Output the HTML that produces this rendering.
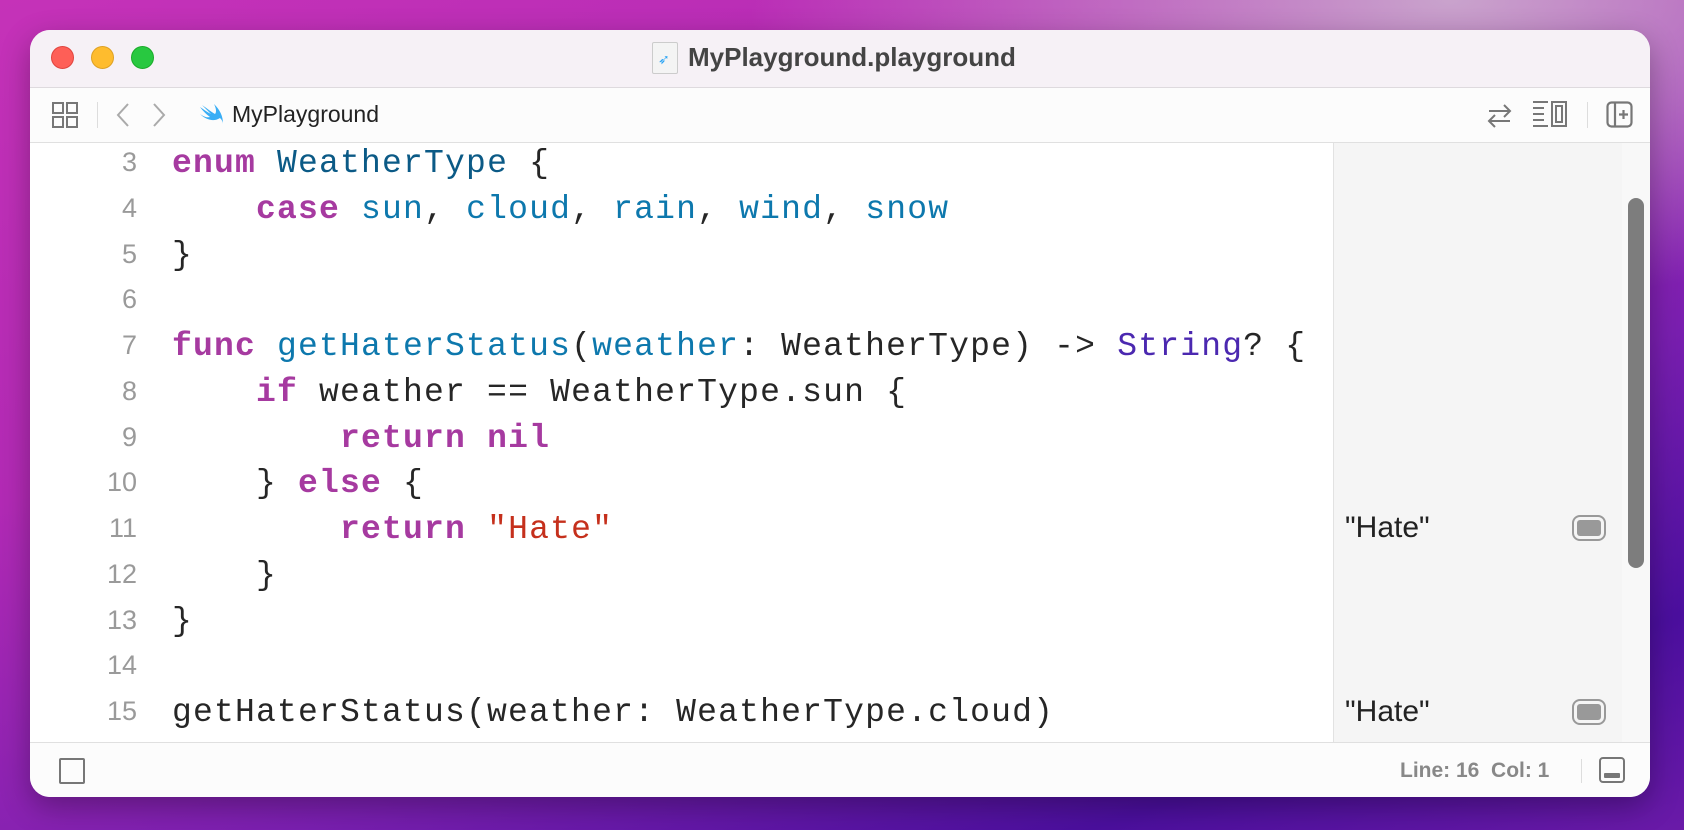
<!DOCTYPE html>
<html><head><meta charset="utf-8"><style>
html,body{margin:0;padding:0;width:1684px;height:830px;overflow:hidden}
body{background:
 radial-gradient(ellipse 700px 300px at 1450px 0px,#c9a3cc 0%,rgba(201,163,204,0.6) 40%,rgba(201,163,204,0) 100%),
 linear-gradient(160deg,#c532b8 0%,#b22ab5 35%,#7a1fb0 65%,#4b0f9e 85%,#6a1aa8 100%);
 position:relative;font-family:"Liberation Sans",sans-serif}
.win{position:absolute;left:30px;top:30px;width:1620px;height:767px;background:#fff;border-radius:20px;overflow:hidden;box-shadow:0 10px 30px rgba(0,0,0,.3)}
.title{position:absolute;left:0;top:0;width:100%;height:57px;background:#f6f1f6;border-bottom:1.5px solid #dedade}
.dot{position:absolute;top:16px;width:21px;height:21px;border-radius:50%}
.tb{position:absolute;left:0;top:58px;width:100%;height:54px;background:#fcfcfc;border-bottom:1.5px solid #e0e0e0}
.editor{position:absolute;left:0;top:113px;width:1303px;height:599px;background:#fff}
.side{position:absolute;left:1303px;top:113px;width:288px;height:599px;background:#f5f5f5;border-left:1.5px solid #e2e2e2;border-right:1.5px solid #e2e2e2}
.scroll{position:absolute;left:1592px;top:113px;width:28px;height:599px;background:#f8f8f8}
.bar{position:absolute;left:1598px;top:168px;width:16px;height:370px;border-radius:8px;background:#7d7d7d}
.bottom{position:absolute;left:0;top:712px;width:100%;height:55px;background:#fcfcfc;border-top:1.5px solid #e0e0e0}
.ln{position:absolute;left:0;width:107px;text-align:right;color:#9a9a9a;font-size:27px;font-family:"Liberation Sans",sans-serif}
.cd{position:absolute;left:142px;font-family:"Liberation Mono",monospace;font-size:33px;letter-spacing:1.2px;color:#262626;white-space:pre}
.k{color:#a63aa0;font-weight:bold}.t{color:#0b5a86}.f{color:#0d78ad}.s{color:#c5301c}.st{color:#4b28b0}
.res{position:absolute;left:1315px;font-size:30px;color:#222}
.qb{position:absolute;left:1542px;width:34px;height:26px;border:2.5px solid #999;border-radius:8px;box-sizing:border-box}
.qb i{position:absolute;left:3px;top:3px;right:3px;bottom:3px;background:#999;border-radius:3px}
</style></head><body>
<div class="win">
 <div class="title">
  <div class="dot" style="left:21px;background:#fe5f57;border:1px solid #e0443e"></div>
  <div class="dot" style="left:61px;background:#febc2e;border:1px solid #dea123"></div>
  <div class="dot" style="left:101px;background:#28c840;border:1px solid #1aab29"></div>
  <div style="position:absolute;left:622px;top:12px;width:24px;height:30px;background:#f4f4f4;border:1px solid #ccc;border-radius:2px"><span style="position:absolute;left:5px;top:8px;color:#2aa4f4;font-size:14px">➶</span></div>
  <div style="position:absolute;left:658px;top:12px;font-size:26px;font-weight:bold;color:#444">MyPlayground.playground</div>
 </div>
 <div class="tb">
  <svg style="position:absolute;left:22px;top:14px" width="26" height="27" viewBox="0 0 26 27" fill="none" stroke="#777" stroke-width="2"><rect x="1" y="1" width="10" height="10"/><rect x="15" y="1" width="10" height="10"/><rect x="1" y="15" width="10" height="10"/><rect x="15" y="15" width="10" height="10"/></svg>
  <div style="position:absolute;left:67px;top:14px;width:1px;height:26px;background:#ddd"></div>
  <svg style="position:absolute;left:84px;top:14px" width="70" height="26" fill="none" stroke="#aaa" stroke-width="2"><path d="M14 2 L4 13 L14 24"/><path d="M40 2 L50 13 L40 24"/></svg>
  <svg style="position:absolute;left:168px;top:14px" width="26" height="24" viewBox="0 0 26 24"><path d="M2 12 C8 18 16 20 22 16 C24 18 25 20 25 22 C25 14 22 8 16 2 C19 8 18 11 17 12 C12 9 7 5 4 3 C8 7 11 10 13 12 C9 10 5 7 2 5 C5 9 9 13 12 15 C8 16 5 14 2 12Z" fill="#3aaef5"/></svg>
  <div style="position:absolute;left:202px;top:13px;font-size:23px;color:#222">MyPlayground</div>
  <svg style="position:absolute;left:1456px;top:15px" width="26" height="26" fill="none" stroke="#777" stroke-width="2"><path d="M3 8 H24 M18 2 L24 8 L18 14"/><path d="M24 18 H3 M9 12 L3 18 L9 24"/></svg>
  <svg style="position:absolute;left:1502px;top:12px" width="38" height="30" fill="none" stroke="#777" stroke-width="2"><path d="M1 2H16M1 8H12M1 14H12M1 20H12M1 26H16"/><rect x="20" y="2" width="14" height="24"/><rect x="24" y="6" width="6" height="16"/></svg>
  <div style="position:absolute;left:1557px;top:14px;width:1px;height:26px;background:#ddd"></div>
  <svg style="position:absolute;left:1576px;top:13px" width="28" height="28" fill="none" stroke="#777" stroke-width="2.2"><rect x="1.5" y="1.5" width="24" height="24" rx="4"/><path d="M9 2V25M13 13.5H22M17.5 9V18"/></svg>
 </div>
 <div class="editor">
  <div class="ln" style="top:4px">3</div><div class="cd" style="top:2px"><span class="k">enum</span> <span class="t">WeatherType</span> {</div>
  <div class="ln" style="top:50px">4</div><div class="cd" style="top:48px">    <span class="k">case</span> <span class="f">sun</span>, <span class="f">cloud</span>, <span class="f">rain</span>, <span class="f">wind</span>, <span class="f">snow</span></div>
  <div class="ln" style="top:96px">5</div><div class="cd" style="top:94px">}</div>
  <div class="ln" style="top:141px">6</div>
  <div class="ln" style="top:187px">7</div><div class="cd" style="top:185px"><span class="k">func</span> <span class="f">getHaterStatus</span>(<span class="f">weather</span>: WeatherType) -&gt; <span class="st">String</span>? {</div>
  <div class="ln" style="top:233px">8</div><div class="cd" style="top:231px">    <span class="k">if</span> weather == WeatherType.sun {</div>
  <div class="ln" style="top:279px">9</div><div class="cd" style="top:277px">        <span class="k">return</span> <span class="k">nil</span></div>
  <div class="ln" style="top:324px">10</div><div class="cd" style="top:322px">    } <span class="k">else</span> {</div>
  <div class="ln" style="top:370px">11</div><div class="cd" style="top:368px">        <span class="k">return</span> <span class="s">"Hate"</span></div>
  <div class="ln" style="top:416px">12</div><div class="cd" style="top:414px">    }</div>
  <div class="ln" style="top:462px">13</div><div class="cd" style="top:460px">}</div>
  <div class="ln" style="top:507px">14</div>
  <div class="ln" style="top:553px">15</div><div class="cd" style="top:551px">getHaterStatus(weather: WeatherType.cloud)</div>
 </div>
 <div class="side"></div>
 <div class="res" style="top:481px">"Hate"</div><div class="qb" style="top:485px"><i></i></div>
 <div class="res" style="top:665px">"Hate"</div><div class="qb" style="top:669px"><i></i></div>
 <div class="scroll"></div><div class="bar"></div>
 <div class="bottom">
  <div style="position:absolute;left:29px;top:15px;width:22px;height:22px;border:2px solid #777;border-radius:2px"></div>
  <div style="position:absolute;left:1370px;top:16px;font-size:21px;color:#888;font-weight:bold">Line: 16&nbsp; Col: 1</div>
  <div style="position:absolute;left:1551px;top:16px;width:1px;height:24px;background:#ddd"></div>
  <div style="position:absolute;left:1569px;top:14px;width:22px;height:22px;border:2px solid #777;border-radius:4px"><div style="position:absolute;left:3px;right:3px;bottom:3px;height:5px;background:#777;border-radius:1px"></div></div>
 </div>
</div>
</body></html>
